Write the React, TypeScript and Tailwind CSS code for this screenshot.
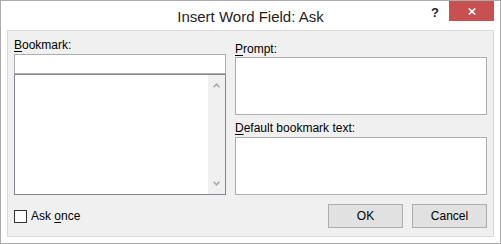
import React from "react";

function Chevron({ up }: { up?: boolean }) {
  return (
    <svg width="7" height="5" viewBox="0 0 7 5" className="block">
      {up ? (
        <polyline points="0.5,4.3 3.5,1.2 6.5,4.3" fill="none" stroke="#a8a8a8" strokeWidth="1.6" />
      ) : (
        <polyline points="0.5,0.7 3.5,3.8 6.5,0.7" fill="none" stroke="#a8a8a8" strokeWidth="1.6" />
      )}
    </svg>
  );
}

export default function App() {
  return (
    <div className="w-[501px] h-[244px] border border-[#ababab] bg-white flex flex-col font-['Liberation_Sans',Arial,sans-serif] text-black select-none">
      {/* Title bar */}
      <div className="relative h-[29px] shrink-0">
        <div className="pt-[7px] text-center text-[15px] leading-[18px] text-[#1e1e1e]">
          Insert Word Field: Ask
        </div>
        <span className="absolute left-[429px] top-[5px] w-[10px] text-center text-[13px] leading-[13px] font-bold text-[#222]">
          ?
        </span>
        <div className="absolute right-[6px] top-0 w-[45px] h-[20px] bg-[#c75050] flex items-center justify-center">
          <svg width="8" height="7" viewBox="0 0 8 7">
            <line x1="0.8" y1="0.5" x2="7.2" y2="6.5" stroke="white" strokeWidth="1.7" />
            <line x1="7.2" y1="0.5" x2="0.8" y2="6.5" stroke="white" strokeWidth="1.7" />
          </svg>
        </div>
      </div>

      {/* Panel */}
      <div className="mx-[6px] h-[207px] border border-[#dadada] bg-[#f0f0f0] px-[6px] flex flex-col text-[12px] leading-[15px]">
        <div className="flex h-[164px]">
          {/* Left column */}
          <div className="w-[212px] flex flex-col">
            <div className="mt-[7px] h-[15px]">
              <u className="underline-offset-2">B</u>ookmark:
            </div>
            <div className="mt-[1px] h-[20px] border border-[#abadb3] bg-white" />
            <div className="h-[121px] border border-[#828790] bg-white flex">
              <div className="flex-1" />
              <div className="w-[17px] bg-[#f0f0f0] flex flex-col items-center justify-between pt-[8px] pb-[8px]">
                <Chevron up />
                <Chevron />
              </div>
            </div>
          </div>
          {/* Right column */}
          <div className="ml-[9px] w-[252px] flex flex-col">
            <div className="mt-[11px] h-[15px]">
              <u className="underline-offset-2">P</u>rompt:
            </div>
            <div className="h-[58px] border border-[#abadb3] bg-white" />
            <div className="mt-[6px] h-[15px]">
              <u className="underline-offset-2">D</u>efault bookmark text:
            </div>
            <div className="mt-[1px] h-[58px] border border-[#abadb3] bg-white" />
          </div>
        </div>

        {/* Bottom row */}
        <div className="mt-[9px] h-[24px] flex items-center">
          <div className="w-[13px] h-[13px] border border-[#333333] bg-white" />
          <span className="ml-[4px] mt-[1px]">
            Ask <u className="underline-offset-2">o</u>nce
          </span>
          <div className="ml-auto flex gap-[9px]">
            <div className="w-[75px] h-[24px] border border-[#adadad] bg-[#e1e1e1] flex items-center justify-center">
              OK
            </div>
            <div className="w-[75px] h-[24px] border border-[#adadad] bg-[#e1e1e1] flex items-center justify-center">
              Cancel
            </div>
          </div>
        </div>
      </div>
    </div>
  );
}
